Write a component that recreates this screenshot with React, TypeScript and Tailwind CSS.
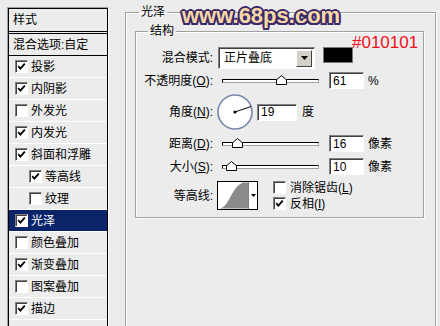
import React from "react";

const sunken =
  "border border-[#808080] border-r-white border-b-white shadow-[inset_1px_1px_0_#404040] bg-white";

const CheckBox = ({ checked }: { checked: boolean }) => (
  <span className={`flex h-[13px] w-[13px] shrink-0 items-center justify-center ${sunken}`}>
    {checked && (
      <svg width="9" height="9" viewBox="0 0 9 9">
        <path d="M1.2 4.2 L3.4 6.6 L7.8 1.6" fill="none" stroke="#000" strokeWidth="1.8" />
      </svg>
    )}
  </span>
);

const Slider = ({ pos }: { pos: number }) => (
  <div className="relative ml-[9px] h-[11px] w-[97px] shrink-0">
    <div className="mt-[4px] h-[4px] border border-black border-r-[#a0a0a0] border-b-[#a0a0a0] bg-white" />
    <svg className="absolute top-0" style={{ left: pos - 5 }} width="11" height="10" viewBox="0 0 11 10">
      <path d="M0.5 9.5V4.8L5.5 0.6L10.5 4.8V9.5Z" fill="#fff" stroke="#000" />
    </svg>
  </div>
);

const Field = ({ value, width }: { value: string; width: string }) => (
  <div className={`flex h-[17px] items-center pl-[3px] ${width} ${sunken}`}>{value}</div>
);

const styleRows = [
  { label: "投影", on: true },
  { label: "内阴影", on: true },
  { label: "外发光", on: false },
  { label: "内发光", on: true },
  { label: "斜面和浮雕", on: true },
  { label: "等高线", on: true, sub: true },
  { label: "纹理", on: false, sub: true },
  { label: "光泽", on: true, active: true },
  { label: "颜色叠加", on: false },
  { label: "渐变叠加", on: true },
  { label: "图案叠加", on: false },
  { label: "描边", on: true },
];

const Label = ({ children }: { children: React.ReactNode }) => (
  <span className="w-[77px] shrink-0 text-right">{children}</span>
);

export default function App() {
  return (
    <div className="relative flex h-[326px] w-[440px] overflow-hidden bg-[#ececec] font-['Liberation_Sans','Noto_Sans_CJK_SC',sans-serif] text-[12px] leading-[14px] text-black">
      {/* styles list */}
      <div className="ml-[7px] mt-[7px] h-[330px] w-[102px] shrink-0 border-l border-t border-r border-[#a0a0a0] border-r-white">
        <div className="h-full border-l border-t border-r border-black">
          <div className="flex h-[23px] items-center border-b border-black pl-[4px]">样式</div>
          <div className="mt-[1px] flex h-[23px] items-center border-y border-black pl-[4px]">混合选项:自定</div>
          {styleRows.map((r) => (
            <div
              key={r.label}
              className={`flex h-[22px] items-center gap-[3px] border-b border-white ${r.sub ? "pl-[20px]" : "pl-[6px]"} ${r.active ? "bg-[#0a246a] text-white" : ""}`}
            >
              <CheckBox checked={r.on} />
              <span>{r.label}</span>
            </div>
          ))}
        </div>
      </div>

      {/* settings */}
      <div className="ml-[16px] pt-[5px]">
        <fieldset className="h-[330px] w-[311px] border border-[#a0a0a0] pl-[9px] shadow-[inset_1px_1px_0_#fff,1px_1px_0_#fff]">
          <legend className="ml-[4px] px-[2px]">光泽</legend>
          <fieldset className="mt-[5px] w-[289px] border border-[#a0a0a0] pb-[7px] shadow-[inset_1px_1px_0_#fff,1px_1px_0_#fff]">
            <legend className="ml-[12px] px-[2px]">结构</legend>

            <div className="mt-[9px] flex h-[22px] items-center">
              <Label>混合模式:</Label>
              <div className={`ml-[5px] flex h-[22px] w-[97px] items-center justify-between pl-[5px] pr-[2px] ${sunken}`}>
                <span>正片叠底</span>
                <span className="flex h-[17px] w-[16px] items-center justify-center border border-white border-r-[#404040] border-b-[#404040] bg-[#d4d0c8]">
                  <svg width="7" height="4" viewBox="0 0 7 4">
                    <path d="M0 0H7L3.5 4Z" fill="#000" />
                  </svg>
                </span>
              </div>
              <div className="ml-[8px] h-[16px] w-[30px] self-start border border-[#7a7a7a] bg-[#010101]" />
            </div>

            <div className="mt-[3px] flex h-[17px] items-center">
              <Label>
                不透明度(<u>O</u>):
              </Label>
              <Slider pos={59} />
              <div className="ml-[10px]">
                <Field value="61" width="w-[35px]" />
              </div>
              <span className="ml-[4px]">%</span>
            </div>

            <div className="mt-[5px] flex h-[36px] items-center">
              <Label>
                角度(<u>N</u>):
              </Label>
              <svg className="ml-[4px] shrink-0" width="36" height="36" viewBox="0 0 36 36">
                <circle cx="18" cy="18" r="17" fill="#fff" stroke="#7587a8" strokeWidth="1.6" />
                <line x1="18" y1="18" x2="34" y2="12.5" stroke="#000" strokeWidth="1" />
                <circle cx="18" cy="18" r="1.6" fill="#000" />
              </svg>
              <div className="ml-[4px]">
                <Field value="19" width="w-[40px]" />
              </div>
              <span className="ml-[5px]">度</span>
            </div>

            <div className="mt-[5px] flex h-[17px] items-center">
              <Label>
                距离(<u>D</u>):
              </Label>
              <Slider pos={15} />
              <div className="ml-[10px]">
                <Field value="16" width="w-[35px]" />
              </div>
              <span className="ml-[4px]">像素</span>
            </div>

            <div className="mt-[6px] flex h-[17px] items-center">
              <Label>
                大小(<u>S</u>):
              </Label>
              <Slider pos={9} />
              <div className="ml-[10px]">
                <Field value="10" width="w-[35px]" />
              </div>
              <span className="ml-[4px]">像素</span>
            </div>

            <div className="mt-[6px] flex h-[29px] items-center">
              <Label>等高线:</Label>
              <div className="ml-[4px] flex h-[29px] w-[41px] border border-black bg-white">
                <svg width="31" height="27" viewBox="0 0 31 27" className="border-r border-[#808080]">
                  <path d="M2 27 C12 25 14 4 26 0 L31 0 L31 27 Z" fill="#8a8a8a" />
                </svg>
                <div className="flex flex-1 items-center justify-center">
                  <svg width="5" height="3" viewBox="0 0 5 3">
                    <path d="M0 0H5L2.5 3Z" fill="#000" />
                  </svg>
                </div>
              </div>
              <div className="ml-[15px] flex flex-col">
                <div className="flex h-[16px] items-center gap-[4px]">
                  <CheckBox checked={false} />
                  <span>
                    消除锯齿(<u>L</u>)
                  </span>
                </div>
                <div className="flex h-[16px] items-center gap-[4px]">
                  <CheckBox checked={true} />
                  <span>
                    反相(<u>I</u>)
                  </span>
                </div>
              </div>
            </div>
          </fieldset>
        </fieldset>
      </div>

      {/* annotation + watermark */}
      <span className="absolute left-[352px] top-[33px] text-[17px] leading-[20px] text-[#f2101c]">#010101</span>
      <span className="absolute left-[182px] top-[4px] text-[22px] font-bold leading-[24px] text-[#f8d9a6] [text-shadow:2px_0_#3b2a6b,-2px_0_#3b2a6b,0_2px_#3b2a6b,0_-2px_#3b2a6b,1.5px_1.5px_#3b2a6b,-1.5px_-1.5px_#3b2a6b,1.5px_-1.5px_#3b2a6b,-1.5px_1.5px_#3b2a6b]">
        www.68ps.com
      </span>
    </div>
  );
}
